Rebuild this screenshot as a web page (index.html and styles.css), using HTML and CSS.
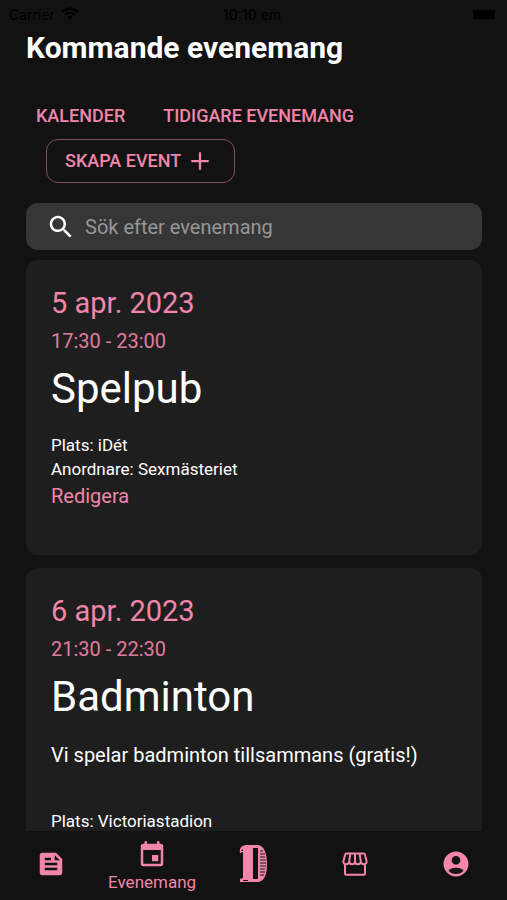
FILE: index.html
```html
<!DOCTYPE html>
<html lang="sv">
<head>
  <meta charset="UTF-8" />
  <meta name="viewport" content="width=device-width, initial-scale=1" />
  <title>Kommande evenemang</title>
  <link rel="stylesheet" href="styles.css">
</head>
<body>
  <div class="statusbar">
    <div class="carrier">
      <span>Carrier</span>
      <svg width="18" height="14" viewBox="0 0 18 14">
        <path d="M1 5a11.500 11.500 0 0 1 16 0M4 8a7 7 0 0 1 10 0" fill="none" stroke="currentColor" stroke-width="2.400" />
        <path d="M6 10a4.500 4.500 0 0 1 6 0l-3 3z" fill="currentColor" />
      </svg>
    </div>
    <div class="clock">10:10 em</div>
    <div class="status-right"><span class="battery"></span></div>
  </div>

  <main>
    <h1>Kommande evenemang</h1>

    <div class="actions">
      <a href="#kalender" class="text-link">KALENDER</a>
      <a href="#tidigare" class="text-link">TIDIGARE EVENEMANG</a>
      <button type="button" class="create">
        SKAPA EVENT
        <svg width="30" height="30" viewBox="0 0 24 24"><path d="M19 12.900h-6.100V19h-1.800v-6.100H5v-1.800h6.100V5h1.800v6.100H19z" /></svg>
      </button>
    </div>

    <form class="search">
      <label for="search" aria-label="Sök">
        <svg width="30" height="30" viewBox="0 0 24 24"><path d="M15.5 14h-.79l-.28-.27C15.410 12.590 16 11.110 16 9.500 16 5.910 13.090 3 9.500 3S3 5.910 3 9.500 5.910 16 9.500 16c1.610 0 3.090-.59 4.230-1.570l.27.28v.79l5 4.990L20.490 19l-4.990-5zm-6 0C7.010 14 5 11.990 5 9.500S7.010 5 9.500 5 14 7.010 14 9.500 11.990 14 9.500 14z" /></svg>
      </label>
      <input type="text" id="search" placeholder="Sök efter evenemang" />
    </form>

    <!-- evenemang -->
    <article class="card">
      <p class="date">5 apr. 2023</p>
      <p class="time">17:30 - 23:00</p>
      <h2>Spelpub</h2>
      <p class="info">Plats: iDét</p>
      <p class="info">Anordnare: Sexmästeriet</p>
      <a href="#redigera" class="edit">Redigera</a>
    </article>

    <article class="card">
      <p class="date">6 apr. 2023</p>
      <p class="time">21:30 - 22:30</p>
      <h2>Badminton</h2>
      <p class="description">Vi spelar badminton tillsammans (gratis!)</p>
      <p class="info">Plats: Victoriastadion</p>
    </article>
  </main>

  <!-- bottennavigering -->
  <nav>
    <a href="#nyheter" aria-label="Nyheter">
      <svg width="30" height="30" viewBox="0 0 24 24"><path fill-rule="evenodd" d="M16 3H5c-1.100 0-2 .9-2 2v14c0 1.100.9 2 2 2h14c1.100 0 2-.9 2-2V8l-5-5zM7 7h5v2H7V7zm10 10H7v-2h10v2zm0-4H7v-2h10v2zm-2-4V5l4 4h-4z" /></svg>
    </a>
    <a href="#evenemang" class="active">
      <svg width="30" height="30" viewBox="0 0 24 24"><path d="M17 12h-5v5h5v-5zM16 1v2H8V1H6v2H5c-1.110 0-1.990.9-1.990 2L3 19c0 1.100.89 2 2 2h14c1.100 0 2-.9 2-2V5c0-1.100-.9-2-2-2h-1V1h-2zm3 18H5V8h14v11z" /></svg>
      <span>Evenemang</span>
    </a>
    <a href="#hem" aria-label="Hem">
      <svg width="28" height="38" viewBox="0 0 28 38">
        <path d="M1 8C0 3 3 0 8 0h10c7 0 10 8 10 19s-3 18-10 18H1v-3l3-1V7z" />
        <path class="cut" d="M14 3h5v31h-5zM4 35h5v1H4zM2 6l2-2v2z" />
        <path class="lines" d="M21 6h3M21 9h5M21 12h5M21 15h6M21 18h6M21 21h6M21 24h5M21 27h5M21 30h4" />
      </svg>
    </a>
    <a href="#butik" aria-label="Butik">
      <svg width="30" height="30" viewBox="0 0 24 24">
        <path class="outline" d="M4 12v7.500c0 .6.4 1 1 1h14c.6 0 1-.4 1-1V12M5.200 3.500h13.600c.6 0 1 .3 1.100.8L21.200 9.500c.4 1.500-.7 2.700-2 2.700-1.400 0-2.400-1-2.600-2.200 0 1.300-1 2.200-2.300 2.200S12 11.200 12 10c0 1.200-1 2.200-2.300 2.200S7.400 11.300 7.400 10c-.2 1.200-1.200 2.200-2.600 2.200-1.300 0-2.400-1.200-2-2.700L4.100 4.300C4.200 3.800 4.600 3.500 5.200 3.500zM8.200 4l-.8 6M12 4v6M15.800 4l.8 6" />
      </svg>
    </a>
    <a href="#konto" aria-label="Konto">
      <svg width="30" height="30" viewBox="0 0 24 24"><path d="M12 2C6.480 2 2 6.480 2 12s4.480 10 10 10 10-4.480 10-10S17.520 2 12 2zm0 3.500c1.930 0 3.500 1.570 3.500 3.500s-1.570 3.500-3.500 3.500S8.500 10.930 8.500 9s1.570-3.500 3.500-3.500zm0 14.500c-2.500 0-4.600-1-6-2.600C6.800 15.900 9.500 15 12 15s5.200.9 6 2.400C16.600 19 14.500 20 12 20z" /></svg>
    </a>
  </nav>
</body>
</html>
```
FILE: styles.css
```css
* {
  box-sizing: border-box;
}
body {
  margin: 0;
  height: 100vh;
  display: flex;
  flex-direction: column;
  overflow: hidden;
  background-color: #121212;
  color: white;
  font-family: Roboto, sans-serif;
}
h1, h2, p {
  margin: 0;
}
a {
  color: #f286aa;
  text-decoration: none;
}
svg {
  display: block;
  fill: currentColor;
}
.statusbar {
  display: grid;
  grid-template-columns: 1fr auto 1fr;
  align-items: center;
  height: 28px;
  padding: 0 12px 0 9px;
  color: black;
  font-family: Inter, sans-serif;
  font-size: 14px;
}
.carrier {
  display: flex;
  align-items: center;
  gap: 6px;
}
.clock {
  font-weight: 500;
}
.status-right {
  display: flex;
  justify-content: flex-end;
}
.battery {
  width: 22px;
  height: 9px;
  border-radius: 2px;
  background-color: black;
}
main {
  flex: 1;
  min-height: 0;
  overflow: hidden;
  padding: 0 25px 0 26px;
}
h1 {
  font-size: 30px;
  line-height: 40px;
  font-weight: 700;
}
.actions {
  display: flex;
  flex-wrap: wrap;
  align-items: center;
  column-gap: 38px;
  row-gap: 11px;
  padding: 36px 10px 20px;
}
.text-link,
.create {
  font-size: 18px;
  line-height: 24px;
  font-weight: 500;
}
.create {
  display: flex;
  align-items: center;
  gap: 4px;
  height: 44px;
  margin-left: 10px;
  padding: 0 19px 0 18px;
  border: 1px solid #80505f;
  border-radius: 12px;
  background: none;
  color: #f286aa;
  font-family: inherit;
  cursor: pointer;
}
.search {
  display: flex;
  align-items: center;
  gap: 9px;
  height: 47px;
  margin-bottom: 10px;
  padding: 0 20px;
  border-radius: 12px;
  background-color: #363636;
}
.search input {
  flex: 1;
  min-width: 0;
  padding: 0;
  border: none;
  outline: none;
  background: none;
  color: white;
  font-family: inherit;
  font-size: 20px;
}
.search input::placeholder {
  color: #979797;
}
.card {
  min-height: 295px;
  margin-bottom: 13px;
  padding: 25px;
  border-radius: 12px;
  background-color: #1e1e1e;
}
.date {
  font-size: 29px;
  line-height: 36px;
  color: #f286aa;
}
.time {
  margin-top: 8px;
  font-size: 20px;
  line-height: 24px;
  color: #e17c9e;
}
.card h2 {
  margin: 10px 0 18px;
  font-size: 42px;
  line-height: 52px;
  font-weight: 400;
}
.description {
  padding: 2px 0 42px;
  font-size: 20px;
  line-height: 24px;
}
.info {
  font-size: 17px;
  line-height: 24px;
}
.edit {
  display: inline-block;
  margin-top: 3px;
  font-size: 20px;
  line-height: 24px;
}
nav {
  display: grid;
  grid-template-columns: repeat(5, 1fr);
  height: 69px;
  background-color: #121212;
}
nav a {
  display: flex;
  flex-direction: column;
  align-items: center;
  justify-content: center;
  padding-bottom: 4px;
}
nav .active {
  padding-bottom: 0;
  font-size: 17px;
  line-height: 20px;
}
nav .active svg {
  margin-bottom: 2px;
}
.cut {
  fill: #121212;
}
.lines {
  stroke: #121212;
  stroke-width: 1;
}
.outline {
  fill: none;
  stroke: currentColor;
  stroke-width: 1.6;
}
```
